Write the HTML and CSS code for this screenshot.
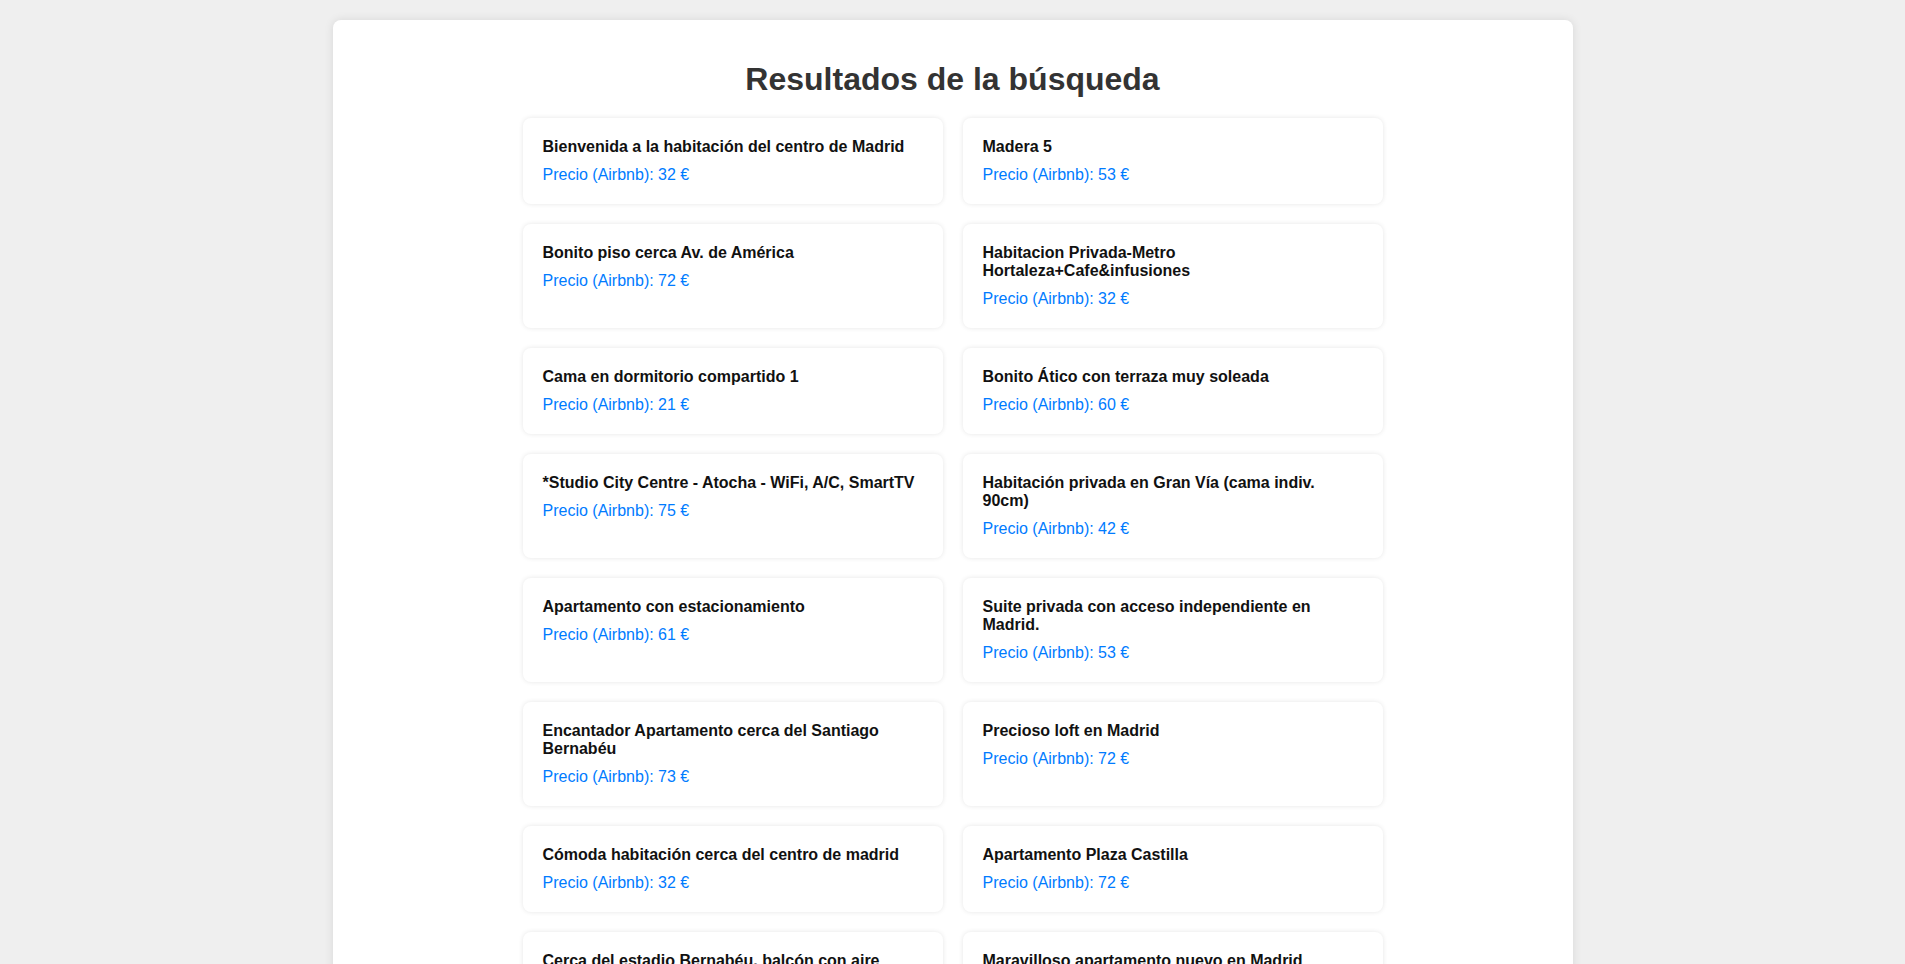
FILE: index.html
```html
<!DOCTYPE html>
<html lang="es">
<head>
<meta charset="utf-8">
<title>Resultados de la búsqueda</title>
<link rel="stylesheet" href="styles.css">
</head>
<body>
<div class="container">
  <h1 class="page-title">Resultados de la búsqueda</h1>
  <div class="results">
    <div class="card"><h3 class="card-title">Bienvenida a la habitación del centro de Madrid</h3><p class="card-price">Precio (Airbnb): 32 €</p></div>
    <div class="card"><h3 class="card-title">Madera 5</h3><p class="card-price">Precio (Airbnb): 53 €</p></div>
    <div class="card"><h3 class="card-title">Bonito piso cerca Av. de América</h3><p class="card-price">Precio (Airbnb): 72 €</p></div>
    <div class="card"><h3 class="card-title">Habitacion Privada-Metro Hortaleza+Cafe&amp;infusiones</h3><p class="card-price">Precio (Airbnb): 32 €</p></div>
    <div class="card"><h3 class="card-title">Cama en dormitorio compartido 1</h3><p class="card-price">Precio (Airbnb): 21 €</p></div>
    <div class="card"><h3 class="card-title">Bonito Ático con terraza muy soleada</h3><p class="card-price">Precio (Airbnb): 60 €</p></div>
    <div class="card"><h3 class="card-title">*Studio City Centre - Atocha - WiFi, A/C, SmartTV</h3><p class="card-price">Precio (Airbnb): 75 €</p></div>
    <div class="card"><h3 class="card-title">Habitación privada en Gran Vía (cama indiv. 90cm)</h3><p class="card-price">Precio (Airbnb): 42 €</p></div>
    <div class="card"><h3 class="card-title">Apartamento con estacionamiento</h3><p class="card-price">Precio (Airbnb): 61 €</p></div>
    <div class="card"><h3 class="card-title">Suite privada con acceso independiente en Madrid.</h3><p class="card-price">Precio (Airbnb): 53 €</p></div>
    <div class="card"><h3 class="card-title">Encantador Apartamento cerca del Santiago Bernabéu</h3><p class="card-price">Precio (Airbnb): 73 €</p></div>
    <div class="card"><h3 class="card-title">Precioso loft en Madrid</h3><p class="card-price">Precio (Airbnb): 72 €</p></div>
    <div class="card"><h3 class="card-title">Cómoda habitación cerca del centro de madrid</h3><p class="card-price">Precio (Airbnb): 32 €</p></div>
    <div class="card"><h3 class="card-title">Apartamento Plaza Castilla</h3><p class="card-price">Precio (Airbnb): 72 €</p></div>
    <div class="card"><h3 class="card-title">Cerca del estadio Bernabéu, balcón con aire acondicionado</h3><p class="card-price">Precio (Airbnb): 65 €</p></div>
    <div class="card"><h3 class="card-title">Maravilloso apartamento nuevo en Madrid</h3><p class="card-price">Precio (Airbnb): 80 €</p></div>
    <div class="card"><h3 class="card-title">Habitación doble en Chamberí</h3><p class="card-price">Precio (Airbnb): 38 €</p></div>
    <div class="card"><h3 class="card-title">Estudio luminoso junto a Sol</h3><p class="card-price">Precio (Airbnb): 58 €</p></div>
  </div>
</div>
</body>
</html>
```

FILE: styles.css
```css
html, body {
  margin: 0;
  padding: 0;
}

body {
  background: #efefef;
  font-family: "Liberation Sans", Arial, sans-serif;
  color: #000;
}

.container {
  width: 1200px;
  margin: 20px auto;
  padding: 20px;
  background: #fff;
  border-radius: 8px;
  box-shadow: 0 0 10px rgba(0, 0, 0, 0.1);
}

.page-title {
  margin: 21px 0 20px;
  font-size: 32px;
  font-weight: bold;
  color: #333;
  text-align: center;
  line-height: normal;
}

.results {
  display: grid;
  grid-template-columns: repeat(2, 420px);
  justify-content: center;
  gap: 20px;
}

.card {
  background: #fff;
  border-radius: 8px;
  padding: 20px;
  box-shadow: 0 0 5px rgba(0, 0, 0, 0.1);
  box-sizing: border-box;
}

.card-title {
  margin: 0 0 10px;
  font-size: 16px;
  font-weight: bold;
  color: #111;
  line-height: normal;
}

.card-price {
  margin: 0;
  font-size: 16px;
  color: #007bff;
  line-height: normal;
}
```
